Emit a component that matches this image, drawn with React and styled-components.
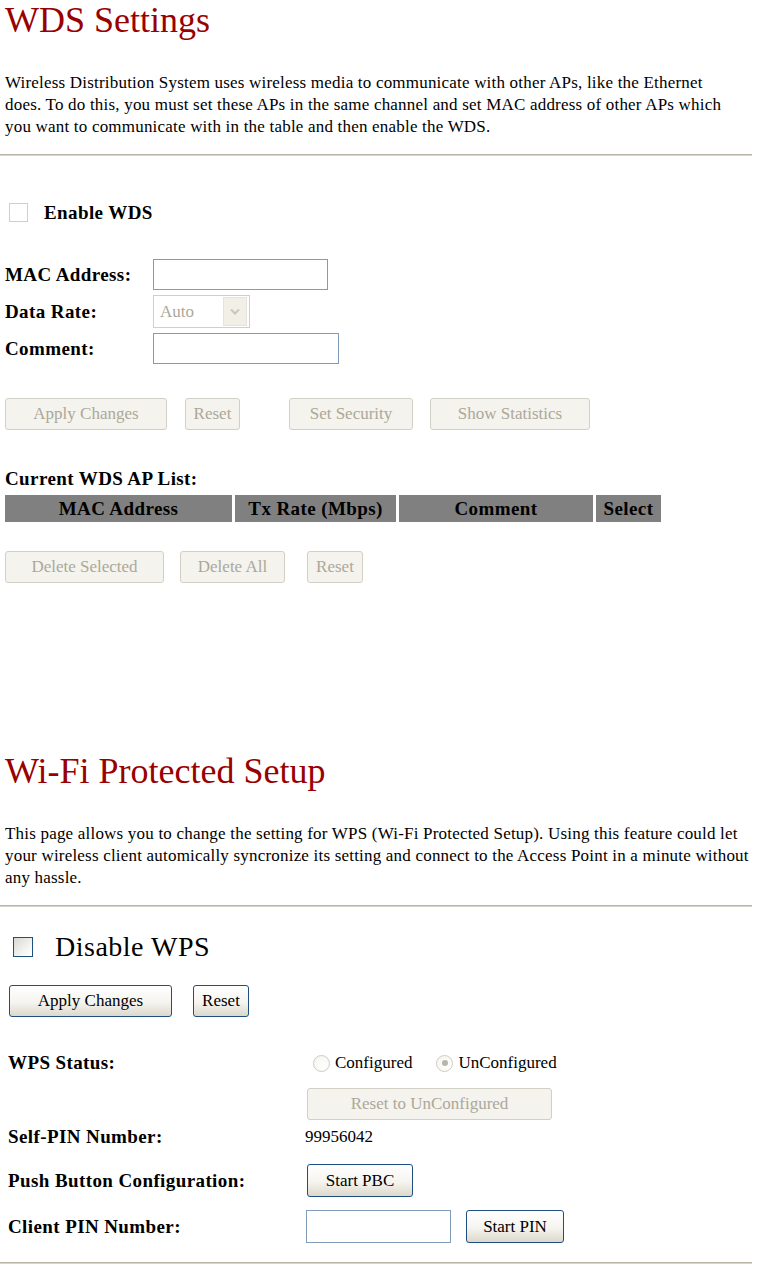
import React from 'react';
import styled, { createGlobalStyle } from 'styled-components';

const Global = createGlobalStyle`
  html, body { margin: 0; padding: 0; background: #fff; }
  body { font-family: "Liberation Serif", "Times New Roman", serif; color: #000; }
`;

const Page = styled.div`
  width: 747px;
  padding: 0 0 20px 5px;
`;

const Title = styled.h1`
  margin: ${p => p.$top}px 0 0 0;
  font-size: 36px;
  line-height: 40px;
  font-weight: normal;
  color: #990000;
`;

const Para = styled.p`
  margin: 32px 0 0 0;
  font-size: 17px;
  line-height: 22px;
  letter-spacing: 0.2px;
  white-space: nowrap;
`;

const Rule = styled.div`
  margin: ${p => p.$top}px 0 0 -5px;
  width: 752px;
  height: 2px;
  background: linear-gradient(#b9b5a6 0 1px, #d8d5ca 1px 2px);
`;

const CheckRow = styled.label`
  display: flex;
  align-items: center;
  height: ${p => p.$h}px;
  gap: ${p => p.$gap}px;
  margin: ${p => p.$top}px 0 0 ${p => p.$left}px;
`;

const Check = styled.span`
  display: inline-block;
  box-sizing: border-box;
  width: ${p => p.$size}px;
  height: ${p => p.$size}px;
  border: 1px solid ${p => (p.$active ? '#1c5180' : '#d2d0c4')};
  background: ${p => (p.$active ? 'linear-gradient(135deg, #d8d8d2 0%, #f6f6f3 70%, #fff 100%)' : '#fff')};
`;

const CheckText = styled.span`
  font-size: ${p => p.$size}px;
  line-height: ${p => p.$size + 2}px;
  font-weight: ${p => (p.$bold ? 'bold' : 'normal')};
  letter-spacing: ${p => p.$ls}px;
`;

const FormGrid = styled.div`
  display: grid;
  grid-template-columns: 148px auto;
  align-items: center;
  row-gap: 5px;
  margin-top: ${p => p.$top}px;
`;

const Label = styled.div`
  font-size: 19px;
  line-height: 20px;
  font-weight: bold;
  letter-spacing: 0.4px;
  white-space: nowrap;
`;

const TextInput = styled.div`
  box-sizing: border-box;
  width: ${p => p.$w}px;
  height: ${p => p.$h || 31}px;
  border: 1px solid #7f9db9;
  background: #fff;
`;

const Select = styled.div`
  box-sizing: border-box;
  width: 97px;
  height: 33px;
  border: 1px solid #d2d0c4;
  display: flex;
  align-items: center;
  padding: 2px;
  gap: 2px;
`;

const SelectValue = styled.span`
  flex: 1;
  font-size: 17px;
  color: #aca899;
  padding-left: 4px;
`;

const SelectArrow = styled.span`
  width: 22px;
  height: 27px;
  background: #f1efe6;
  border: 1px solid #e6e4da;
  display: flex;
  align-items: center;
  justify-content: center;
`;

const ButtonRow = styled.div`
  display: flex;
  align-items: center;
  margin: ${p => p.$top}px 0 0 ${p => p.$left || 0}px;
`;

const Button = styled.button`
  box-sizing: border-box;
  width: ${p => p.$w}px;
  height: ${p => p.$h || 32}px;
  margin-left: ${p => p.$ml || 0}px;
  padding: 0;
  font-family: "Liberation Serif", "Times New Roman", serif;
  font-size: 17px;
  border-radius: 3px;
  ${p =>
    p.$on
      ? `
    color: #000;
    border: 1px solid #1f4f82;
    background: linear-gradient(#ffffff 0%, #f5f4ef 55%, #dcd8cc 100%);
  `
      : `
    color: #aca899;
    border: 1px solid #d2d0c4;
    background: #f4f3ee;
  `}
`;

const SubHead = styled.div`
  margin-top: ${p => p.$top}px;
  height: 20px;
  line-height: 20px;
  font-size: 19px;
  font-weight: bold;
  letter-spacing: 0.4px;
`;

const ApTable = styled.table`
  margin: 3px 0 0 -3px;
  border-collapse: separate;
  border-spacing: 3px;
`;

const Th = styled.th`
  width: ${p => p.$w}px;
  height: 27px;
  padding: 0;
  background: #808080;
  font-size: 19px;
  line-height: 20px;
  font-weight: bold;
  text-align: center;
  letter-spacing: 0.4px;
  white-space: nowrap;
`;

const WpsRow = styled.div`
  display: flex;
  align-items: center;
  min-height: 20px;
  margin: ${p => p.$top}px 0 0 3px;
`;

const WpsLabel = styled(Label)`
  width: 297px;
  flex: none;
`;

const RadioGroup = styled.div`
  display: flex;
  align-items: center;
  font-size: 17px;
  line-height: 20px;
  margin-left: 8px;
`;

const RadioItem = styled.span`
  display: inline-flex;
  align-items: center;
  gap: 5px;
  margin-right: ${p => p.$mr || 0}px;
`;

const Radio = styled.span`
  box-sizing: border-box;
  width: 17px;
  height: 17px;
  border-radius: 50%;
  border: 1px solid #cfcdc1;
  background: radial-gradient(circle at 65% 65%, #fff 0%, #f3f2ec 100%);
  display: flex;
  align-items: center;
  justify-content: center;
  &::after {
    content: '';
    display: ${p => (p.$checked ? 'block' : 'none')};
    width: 6px;
    height: 6px;
    border-radius: 50%;
    background: #b8b6aa;
  }
`;

const Value = styled.div`
  font-size: 17px;
  line-height: 20px;
`;

const Cell = styled.div`
  display: flex;
  align-items: center;
  gap: ${p => p.$gap || 0}px;
  margin-left: ${p => p.$ml || 0}px;
`;

export default function App() {
  return (
    <Page>
      <Global />
      <Title $top={0}>WDS Settings</Title>
      <Para>
        Wireless Distribution System uses wireless media to communicate with other APs, like the Ethernet
        <br />
        does. To do this, you must set these APs in the same channel and set MAC address of other APs which
        <br />
        you want to communicate with in the table and then enable the WDS.
      </Para>
      <Rule $top={16} />

      <CheckRow $top={46} $left={4} $h={20} $gap={16}>
        <Check $size={19} />
        <CheckText $size={19} $ls={0.4} $bold>Enable WDS</CheckText>
      </CheckRow>

      <FormGrid $top={37}>
        <Label>MAC Address:</Label>
        <TextInput $w={175} />
        <Label>Data Rate:</Label>
        <Select>
          <SelectValue>Auto</SelectValue>
          <SelectArrow>
            <svg width="10" height="7" viewBox="0 0 10 7">
              <path d="M1 1.5 L5 5.5 L9 1.5" fill="none" stroke="#c9c7ba" strokeWidth="2" />
            </svg>
          </SelectArrow>
        </Select>
        <Label>Comment:</Label>
        <TextInput $w={186} />
      </FormGrid>

      <ButtonRow $top={34}>
        <Button $w={162}>Apply Changes</Button>
        <Button $w={55} $ml={18}>Reset</Button>
        <Button $w={124} $ml={49}>Set Security</Button>
        <Button $w={160} $ml={17}>Show Statistics</Button>
      </ButtonRow>

      <SubHead $top={39}>Current WDS AP List:</SubHead>
      <ApTable>
        <thead>
          <tr>
            <Th $w={227}>MAC Address</Th>
            <Th $w={161}>Tx Rate (Mbps)</Th>
            <Th $w={194}>Comment</Th>
            <Th $w={65}>Select</Th>
          </tr>
        </thead>
      </ApTable>

      <ButtonRow $top={26}>
        <Button $w={159}>Delete Selected</Button>
        <Button $w={105} $ml={16}>Delete All</Button>
        <Button $w={56} $ml={22}>Reset</Button>
      </ButtonRow>

      <Title $top={168}>Wi-Fi Protected Setup</Title>
      <Para>
        This page allows you to change the setting for WPS (Wi-Fi Protected Setup). Using this feature could let
        <br />
        your wireless client automically syncronize its setting and connect to the Access Point in a minute without
        <br />
        any hassle.
      </Para>
      <Rule $top={16} />

      <CheckRow $top={25} $left={8} $h={30} $gap={22}>
        <Check $size={20} $active />
        <CheckText $size={28} $ls={0.5}>Disable WPS</CheckText>
      </CheckRow>

      <ButtonRow $top={23} $left={4}>
        <Button $w={163} $on>Apply Changes</Button>
        <Button $w={56} $ml={21} $on>Reset</Button>
      </ButtonRow>

      <WpsRow $top={36}>
        <WpsLabel>WPS Status:</WpsLabel>
        <RadioGroup>
          <RadioItem $mr={24}>
            <Radio />
            Configured
          </RadioItem>
          <RadioItem>
            <Radio $checked />
            UnConfigured
          </RadioItem>
        </RadioGroup>
      </WpsRow>
      <WpsRow $top={15}>
        <WpsLabel />
        <Cell $ml={2}>
          <Button $w={245}>Reset to UnConfigured</Button>
        </Cell>
      </WpsRow>
      <WpsRow $top={7}>
        <WpsLabel>Self-PIN Number:</WpsLabel>
        <Value>99956042</Value>
      </WpsRow>
      <WpsRow $top={17}>
        <WpsLabel>Push Button Configuration:</WpsLabel>
        <Cell $ml={2}>
          <Button $w={106} $h={33} $on>Start PBC</Button>
        </Cell>
      </WpsRow>
      <WpsRow $top={13}>
        <WpsLabel>Client PIN Number:</WpsLabel>
        <Cell $ml={1} $gap={15}>
          <TextInput $w={145} $h={33} />
          <Button $w={98} $h={33} $on>Start PIN</Button>
        </Cell>
      </WpsRow>
      <Rule $top={19} />
    </Page>
  );
}
